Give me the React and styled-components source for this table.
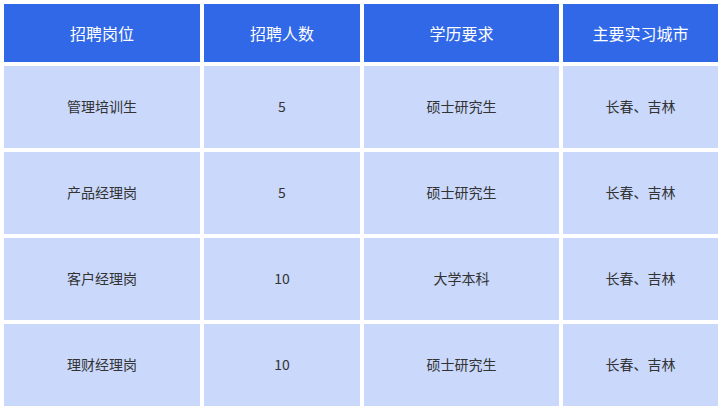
import React from "react";
import styled, { createGlobalStyle } from "styled-components";

const GlobalStyle = createGlobalStyle`
  html, body {
    margin: 0;
    padding: 0;
    background: #ffffff;
  }
  body {
    font-family: "Noto Sans CJK SC", "Noto Sans", sans-serif;
  }
`;

const Table = styled.div`
  display: grid;
  grid-template-columns: 196px 156px 195px 155px;
  grid-template-rows: 58px repeat(4, 82px);
  gap: 4px;
  padding: 4px;
  width: 722px;
  box-sizing: border-box;
  background: #ffffff;
`;

const Cell = styled.div`
  display: flex;
  align-items: center;
  justify-content: center;
  background: ${(p) => (p.$head ? "#3068e8" : "#c9d8fb")};
  color: ${(p) => (p.$head ? "#ffffff" : "#333333")};
  font-size: ${(p) => (p.$head ? "16px" : "14px")};
  font-weight: 400;
  padding-bottom: ${(p) => (p.$head ? "0" : "2px")};
`;

const headers = ["招聘岗位", "招聘人数", "学历要求", "主要实习城市"];

const rows = [
  ["管理培训生", "5", "硕士研究生", "长春、吉林"],
  ["产品经理岗", "5", "硕士研究生", "长春、吉林"],
  ["客户经理岗", "10", "大学本科", "长春、吉林"],
  ["理财经理岗", "10", "硕士研究生", "长春、吉林"],
];

export default function App() {
  return (
    <>
      <GlobalStyle />
      <Table>
        {headers.map((h) => (
          <Cell key={h} $head>
            {h}
          </Cell>
        ))}
        {rows.map((r, i) =>
          r.map((c, j) => <Cell key={i + "-" + j}>{c}</Cell>)
        )}
      </Table>
    </>
  );
}
